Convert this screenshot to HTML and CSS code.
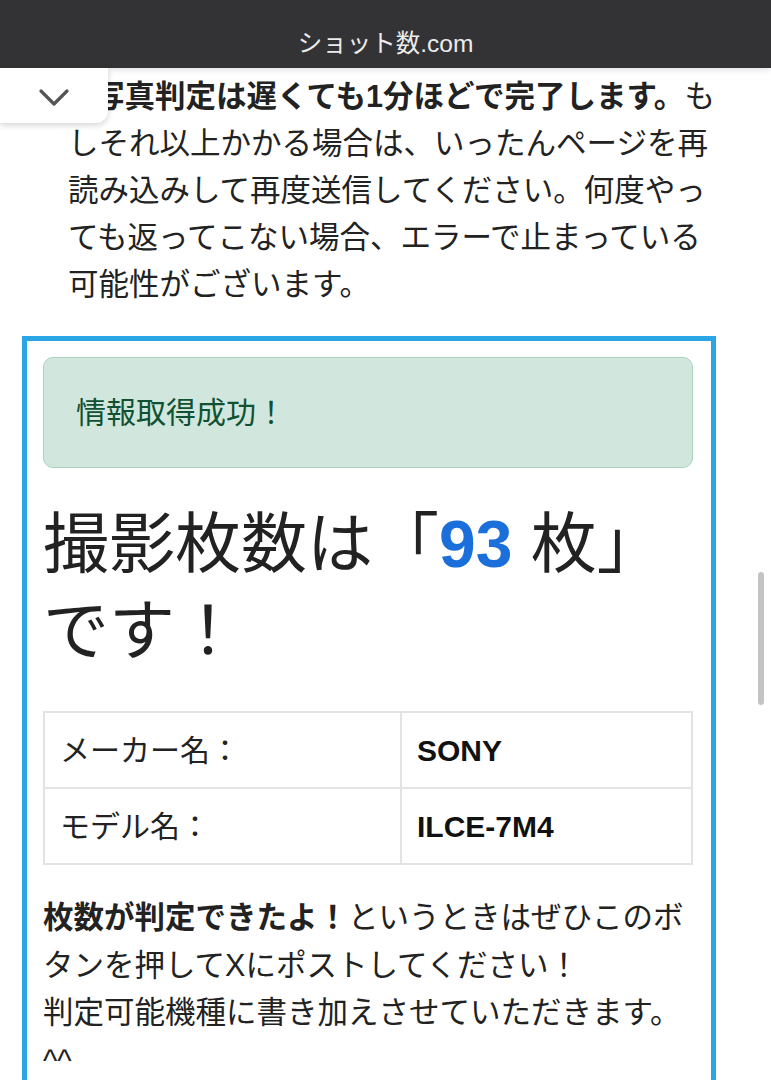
FILE: index.html
```html
<!DOCTYPE html>
<html lang="ja">
<head>
<meta charset="utf-8">
<title>ショット数.com</title>
<link rel="stylesheet" href="styles.css">
</head>
<body>
<header class="topbar"><span class="site-title">ショット数.com</span></header>
<div class="tab-toggle">
  <svg width="108" height="55" viewBox="0 0 108 55"><polyline points="41,23 54,36 67,23" fill="none" stroke="#555" stroke-width="3.2" stroke-linecap="round" stroke-linejoin="round"/></svg>
</div>
<main class="page">
  <p class="notice"><strong>写真判定は遅くても1分ほどで完了します。</strong>もしそれ以上かかる場合は、いったんページを再読み込みして再度送信してください。何度やっても返ってこない場合、エラーで止まっている可能性がございます。</p>
  <section class="result-card">
    <div class="alert-success">情報取得成功！</div>
    <h1 class="result-title">撮影枚数は「<span class="count">93</span> 枚」です！</h1>
    <table class="info-table">
      <tr><td class="label">メーカー名：</td><td class="value">SONY</td></tr>
      <tr><td class="label">モデル名：</td><td class="value">ILCE-7M4</td></tr>
    </table>
    <p class="share-text"><strong>枚数が判定できたよ！</strong>というときはぜひこのボタンを押してXにポストしてください！<br>判定可能機種に書き加えさせていただきます。^^</p>
  </section>
</main>
<div class="scroll-thumb"></div>
</body>
</html>
```

FILE: styles.css
```css
html, body {
  margin: 0;
  padding: 0;
  background: #ffffff;
  overflow: hidden;
}
body {
  font-family: "Liberation Sans", "Noto Sans CJK JP", sans-serif;
  color: #222222;
  font-size: 30.5px;
  line-height: 47px;
  position: relative;
  min-height: 1080px;
}
.topbar {
  height: 68px;
  background: #333335;
  display: flex;
  justify-content: center;
  align-items: flex-end;
  box-shadow: 0 2px 6px rgba(0, 0, 0, 0.12);
  position: relative;
  z-index: 2;
}
.site-title {
  color: #ececec;
  font-size: 24.5px;
  line-height: 30px;
  padding-bottom: 9px;
}
.tab-toggle {
  position: absolute;
  top: 68px;
  left: 0;
  width: 108px;
  height: 55px;
  background: #ffffff;
  border-radius: 0 0 12px 0;
  box-shadow: 0 2px 6px rgba(0, 0, 0, 0.18);
  z-index: 3;
}
.tab-toggle svg {
  display: block;
}
.page {
  padding-top: 5px;
}
.notice {
  margin: 0 0 28px 68px;
  width: 657px;
  text-indent: 26px;
}
.notice strong {
  font-weight: 700;
}
.result-card {
  margin-left: 22px;
  width: 650px;
  border: 5px solid #2aa6e6;
  border-bottom: none;
  padding: 16px 18px 60px 16px;
}
.alert-success {
  background: #d1e7dd;
  border: 1px solid #a9d3c0;
  border-radius: 10px;
  color: #0f5132;
  padding: 31px 32px;
  font-size: 30px;
}
.result-title {
  margin: 33px 0 36px 0;
  font-size: 66px;
  line-height: 87px;
  font-weight: 400;
  color: #222222;
}
.count {
  color: #1b6fdb;
  font-weight: 700;
}
.info-table {
  width: 650px;
  border-collapse: collapse;
}
.info-table td {
  border: 2px solid #e2e3e5;
  padding: 15px 16px 14px 15px;
  line-height: 45px;
  font-size: 30px;
}
.info-table .label {
  width: 324px;
}
.info-table .value {
  font-weight: 700;
  color: #111111;
}
.share-text {
  margin: 29px 0 0 0;
  line-height: 47.5px;
}
.share-text strong {
  font-weight: 700;
}
.scroll-thumb {
  position: fixed;
  left: 758px;
  top: 572px;
  width: 6px;
  height: 133px;
  border-radius: 3px;
  background: #c4c4c4;
}
```
